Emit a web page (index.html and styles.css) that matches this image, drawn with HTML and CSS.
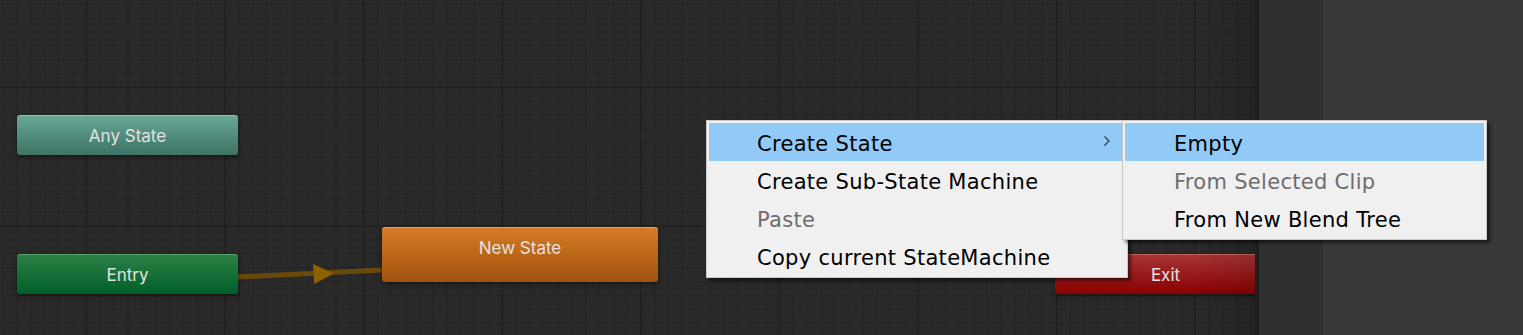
FILE: index.html
```html
<!DOCTYPE html>
<html lang="en">
<head>
    <meta charset="UTF-8">
    <title>Animator</title>
    <link rel="stylesheet" href="styles.css">
</head>
<body>
    <div class="editor">
        <div class="graph">
            <svg class="transitions" width="1255" height="335" viewBox="0 0 1255 335">
                <line x1="238" y1="277" x2="382" y2="270" stroke="#6a4a0c" stroke-width="5"></line>
                <polygon points="313,264 334,273.5 314,284" fill="#8c6100"></polygon>
            </svg>

            <div class="node node-any" style="left: 17px; top: 115px;">Any State</div>
            <div class="node node-entry" style="left: 17px; top: 254px;">Entry</div>
            <div class="node node-default" style="left: 382px; top: 227px;">New State</div>
            <div class="node node-exit" style="left: 1055px; top: 254px;">Exit</div>
        </div>
        <div class="divider"></div>
        <div class="side side-narrow"></div>
        <div class="side side-wide"></div>

        <!-- context menu -->
        <div class="menu menu-main">
            <div class="menu-item active">
                <span>Create State</span>
                <svg class="submenu-arrow" width="8" height="12" viewBox="0 0 8 12">
                    <polyline points="1.5,1.5 6,6 1.5,10.5" fill="none" stroke="#333" stroke-width="1.2"></polyline>
                </svg>
            </div>
            <div class="menu-item">Create Sub-State Machine</div>
            <div class="menu-item disabled">Paste</div>
            <div class="menu-item">Copy current StateMachine</div>
        </div>
        <div class="menu menu-sub">
            <div class="menu-item active">Empty</div>
            <div class="menu-item disabled">From Selected Clip</div>
            <div class="menu-item">From New Blend Tree</div>
        </div>
    </div>
</body>
</html>
```

FILE: styles.css
```css
/* Base */
* {
    margin: 0;
    padding: 0;
    box-sizing: border-box;
}
body {
    width: 1523px;
    height: 335px;
    overflow: hidden;
    background: #383838;
    font-family: Inter, "Noto Sans", sans-serif;
}

/* Editor layout */
.editor {
    position: relative;
    display: flex;
    height: 335px;
}
.graph {
    position: relative;
    width: 1255px;
    flex-shrink: 0;
    overflow: hidden;
    background-color: #292929;
    background-image:
        linear-gradient(to right, #1c1c1c 1px, transparent 1px),
        linear-gradient(to bottom, #1c1c1c 1px, transparent 1px),
        linear-gradient(to right, #232323 1px, transparent 1px),
        linear-gradient(to bottom, #232323 1px, transparent 1px);
    background-size: 138.6px 138.6px, 138.6px 138.6px, 13.86px 13.86px, 13.86px 13.86px;
    background-position: 86px 87px;
}
.graph::after {
    content: '';
    position: absolute;
    top: 0;
    right: 0;
    bottom: 0;
    width: 60px;
    background: linear-gradient(to right, rgba(0, 0, 0, 0), rgba(0, 0, 0, 0.12));
    pointer-events: none;
}
.divider {
    width: 4px;
    background: #1e1e1e;
}
.side-narrow {
    width: 64px;
    background: #303030;
}
.side-wide {
    flex: 1;
    background: #383838;
}

/* Transitions */
.transitions {
    position: absolute;
    top: 0;
    left: 0;
}

/* State nodes */
.node {
    position: absolute;
    width: 221px;
    height: 40px;
    line-height: 40px;
    border-radius: 3px;
    text-align: center;
    font-size: 17px;
    color: #e2e2e2;
    box-shadow: 0 2px 4px rgba(0, 0, 0, 0.45);
}
.node-any {
    background: linear-gradient(to bottom, #67a895, #3d7265);
    border-top: 1px solid #8ec2b2;
}
.node-entry {
    background: linear-gradient(to bottom, #2c8045, #005f29);
    border-top: 1px solid #5aa36c;
}
.node-default {
    width: 276px;
    height: 55px;
    background: linear-gradient(to bottom, #d47b24, #a1520e);
    border-top: 1px solid #e8a15c;
}
.node-exit {
    background: linear-gradient(to bottom, #a83434, #8a0000);
    border-top: 1px solid #c26464;
}

/* Context menu */
.menu {
    position: absolute;
    padding: 2px;
    background: #f0f0f0;
    border: 1px solid #c9c9c9;
    box-shadow: 3px 3px 3px rgba(0, 0, 0, 0.5);
    font-family: "DejaVu Sans", "Noto Sans", sans-serif;
    font-size: 21px;
    letter-spacing: 0.3px;
    color: #000;
    z-index: 2;
}
.menu-main {
    left: 706px;
    top: 120px;
    width: 422px;
}
.menu-sub {
    left: 1122px;
    top: 120px;
    width: 365px;
    z-index: 3;
}
.menu-item {
    display: flex;
    align-items: center;
    justify-content: space-between;
    height: 38px;
    padding: 3px 14px 0 48px;
}
.menu-sub .menu-item {
    padding-left: 49px;
}
.menu-item.active {
    background: #91c9f7;
}
.menu-item.disabled {
    color: #6d6d6d;
}
.submenu-arrow {
    margin-top: -6px;
}
```
